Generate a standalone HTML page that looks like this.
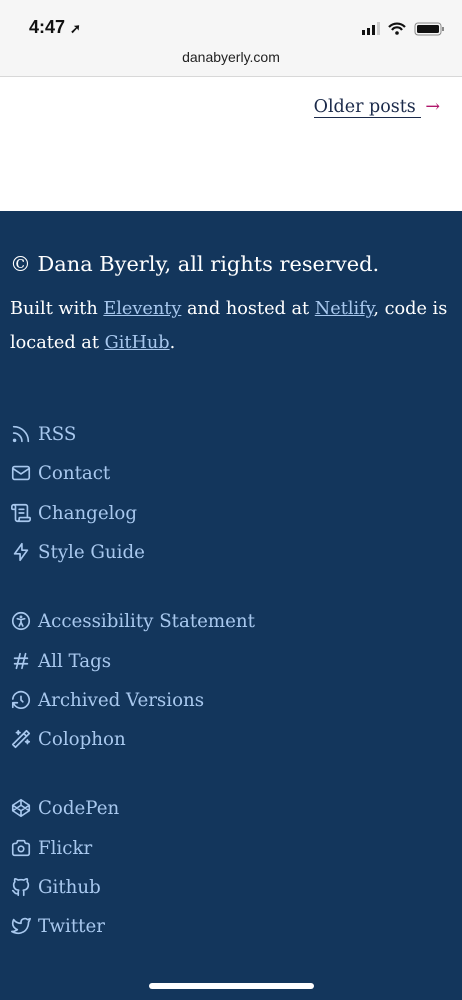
<!DOCTYPE html>
<html><head><meta charset="utf-8"><style>
*{margin:0;padding:0;box-sizing:border-box}
body{width:462px;height:1000px;overflow:hidden;font-family:"DejaVu Serif",serif;background:#13365c}
.top{height:77px;background:#f6f6f6;border-bottom:1px solid #d8d8d8;position:relative;font-family:"Liberation Sans",sans-serif}
.time{position:absolute;left:29px;top:17px;font-size:18px;font-weight:bold;color:#111}
.url{position:absolute;width:100%;text-align:center;top:49px;font-size:14px;color:#222}
.white{height:134px;background:#fff;position:relative}
.older{position:absolute;right:22px;top:20px;font-size:17.5px;color:#1b2a4a}
.older span{border-bottom:1.5px solid #1b2a4a}
.older b{color:#b0166b;font-weight:normal;margin-left:4px}
.foot{color:#fff;padding:0 10px}
.c{font-size:20.9px;position:absolute;top:252px;left:10px}
.p{position:absolute;top:292px;left:10px;right:8px;font-size:17.7px;line-height:34px}
.p a{color:#a8c8ee;text-decoration:underline}
.item{position:absolute;left:10px;font-size:18.2px;color:#a8c8ee;display:flex;align-items:center;height:24px}
.item svg{width:22px;height:22px;margin-right:6px;stroke:#a8c8ee;fill:none;stroke-width:1.8;stroke-linecap:round;stroke-linejoin:round}
.bar{position:absolute;left:149px;top:983px;width:165px;height:6px;border-radius:3px;background:#fff}
</style></head><body>
<div class="top"><div class="time">4:47 <span style="font-size:13px">➚</span></div>
<svg style="position:absolute;left:362px;top:22px" width="86" height="14"><rect x="0" y="8" width="3" height="5" fill="#111"/><rect x="5" y="6" width="3" height="7" fill="#111"/><rect x="10" y="3" width="3" height="10" fill="#111"/><rect x="15" y="0" width="3" height="13" fill="#ccc"/><path d="M27 5a11 11 0 0 1 16 0M30 8a6 6 0 0 1 10 0" stroke="#111" stroke-width="2.2" fill="none"/><circle cx="35" cy="11" r="1.8" fill="#111"/><rect x="53" y="1" width="26" height="12" rx="3" stroke="#888" fill="none"/><rect x="55" y="3" width="22" height="8" rx="1.5" fill="#111"/><rect x="80" y="5" width="2" height="4" fill="#888"/></svg>
<div class="url">danabyerly.com</div></div>
<div class="white"><div class="older"><span>Older posts </span><b>→</b></div></div>
<div class="foot">
<div class="c">© Dana Byerly, all rights reserved.</div>
<div class="p">Built with <a>Eleventy</a> and hosted at <a>Netlify</a>, code is located at <a>GitHub</a>.</div>
</div>
<div class="item" style="top:422px"><svg viewBox="0 0 24 24"><path d="M4 11a9 9 0 0 1 9 9M4 4a16 16 0 0 1 16 16"/><circle cx="5" cy="19" r="1"/></svg>RSS</div>
<div class="item" style="top:461px"><svg viewBox="0 0 24 24"><rect x="3" y="5" width="18" height="14" rx="2"/><path d="M3 7l9 6 9-6"/></svg>Contact</div>
<div class="item" style="top:501px"><svg viewBox="0 0 24 24"><path d="M19 17V5a2 2 0 0 0-2-2H4M15 8h-5M15 12h-5M8 21h12a2 2 0 0 0 2-2v-1a1 1 0 0 0-1-1H11a1 1 0 0 0-1 1v1a2 2 0 1 1-4 0V5a2 2 0 1 0-4 0v2a1 1 0 0 0 1 1h3"/></svg>Changelog</div>
<div class="item" style="top:540px"><svg viewBox="0 0 24 24"><path d="M13 3v7h6l-8 11v-7H5l8-11"/></svg>Style Guide</div>
<div class="item" style="top:609px"><svg viewBox="0 0 24 24"><circle cx="12" cy="12" r="9"/><circle cx="12" cy="7.5" r=".6"/><path d="M8 9.5l4 1 4-1M12 10.5v3l-2 4M12 13.5l2 4"/></svg>Accessibility Statement</div>
<div class="item" style="top:649px"><svg viewBox="0 0 24 24"><path d="M5 9h14M5 15h14M11 4l-4 16M17 4l-4 16"/></svg>All Tags</div>
<div class="item" style="top:688px"><svg viewBox="0 0 24 24"><path d="M12 8v4l2 2M3.05 11a9 9 0 1 1 .5 4m-.5 5v-5h5"/></svg>Archived Versions</div>
<div class="item" style="top:727px"><svg viewBox="0 0 24 24"><path d="M6 21L21 6l-3-3L3 18l3 3M15 6l3 3M9 3a2 2 0 0 0 2 2 2 2 0 0 0-2 2 2 2 0 0 0-2-2 2 2 0 0 0 2-2M19 13a2 2 0 0 0 2 2 2 2 0 0 0-2 2 2 2 0 0 0-2-2 2 2 0 0 0 2-2"/></svg>Colophon</div>
<div class="item" style="top:796px"><svg viewBox="0 0 24 24"><path d="M3 15l9 6 9-6-9-6-9 6M3 9l9 6 9-6-9-6-9 6M3 9v6M21 9v6M12 3v6M12 15v6"/></svg>CodePen</div>
<div class="item" style="top:836px"><svg viewBox="0 0 24 24"><path d="M5 7h1a2 2 0 0 0 2-2 1 1 0 0 1 1-1h6a1 1 0 0 1 1 1 2 2 0 0 0 2 2h1a2 2 0 0 1 2 2v9a2 2 0 0 1-2 2H5a2 2 0 0 1-2-2V9a2 2 0 0 1 2-2"/><circle cx="12" cy="13" r="3"/></svg>Flickr</div>
<div class="item" style="top:875px"><svg viewBox="0 0 24 24"><path d="M9 19c-4.3 1.4-4.3-2.5-6-3m12 5v-3.5c0-1 .1-1.4-.5-2 2.8-.3 5.5-1.4 5.5-6a4.6 4.6 0 0 0-1.3-3.2 4.2 4.2 0 0 0-.1-3.2s-1.1-.3-3.5 1.3a12.3 12.3 0 0 0-6.2 0C6.5 2.8 5.4 3.1 5.4 3.1a4.2 4.2 0 0 0-.1 3.2A4.6 4.6 0 0 0 4 9.5c0 4.6 2.7 5.7 5.5 6-.6.6-.6 1.2-.5 2V21"/></svg>Github</div>
<div class="item" style="top:914px"><svg viewBox="0 0 24 24"><path d="M22 4.01c-1 .49-1.98.689-3 .99-1.121-1.265-2.783-1.335-4.38-.737S11.977 6.323 12 8v1c-3.245.083-6.135-1.395-8-4 0 0-4.182 7.433 4 11-1.872 1.247-3.739 2.088-6 2 3.308 1.803 6.913 2.423 10.034 1.517 3.58-1.04 6.522-3.723 7.651-7.742a13.84 13.84 0 0 0 .497-3.753C20.18 7.773 21.692 5.25 22 4.009z"/></svg>Twitter</div>
<div class="bar"></div>
</body></html>
